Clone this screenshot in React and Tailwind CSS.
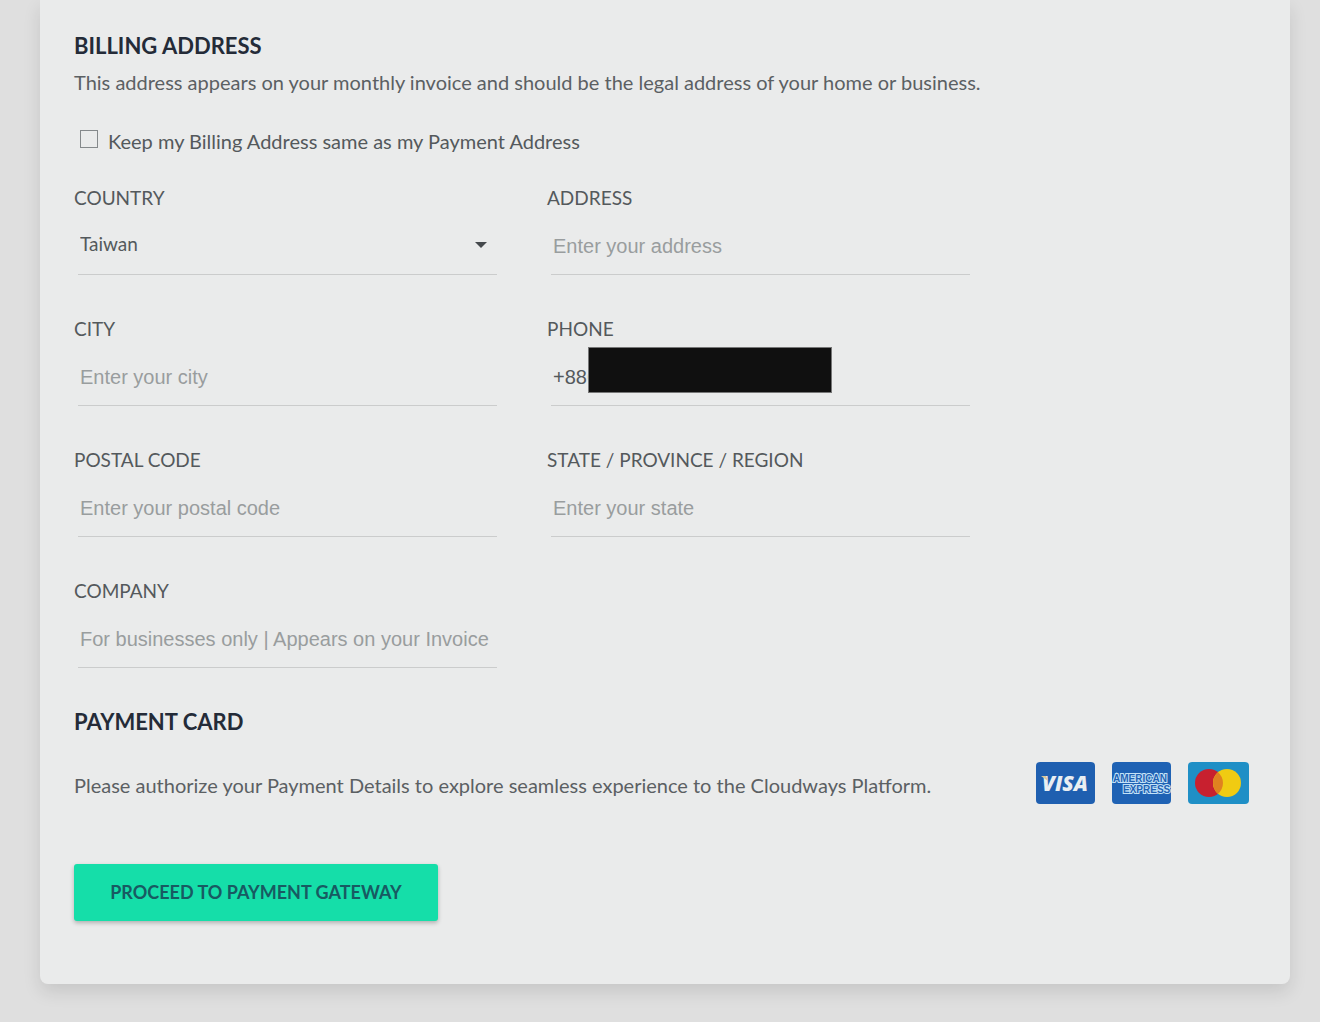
import React from "react";

const labelClass = "block text-[19px] leading-6 text-[#54595c]";
const lineClass = "h-[57px] w-full border-b border-[#cbcccc] bg-transparent outline-none";

function Field({ id, label, children }) {
  return (
    <div>
      <label htmlFor={id} className={labelClass}>{label}</label>
      <div className="relative mt-2 pl-1">{children}</div>
    </div>
  );
}

function TextField({ id, label, placeholder, defaultValue, children }) {
  return (
    <Field id={id} label={label}>
      <input
        id={id}
        type="text"
        placeholder={placeholder}
        defaultValue={defaultValue}
        className={`${lineClass} px-0.5 font-['Liberation_Sans',sans-serif] text-[20px] text-[#54595c] placeholder:text-[#999d9e]`}
      />
      {children}
    </Field>
  );
}

function Visa() {
  return (
    <svg viewBox="0 0 59 42" className="h-[42px] w-[59px]" role="img" aria-label="Visa">
      <rect width="59" height="42" rx="4" fill="#1f5fb0" />
      <text x="29" y="29" textAnchor="middle" fontFamily="Open Sans, sans-serif" fontSize="21" fontWeight="800" fontStyle="italic" fill="#e9eef2">VISA</text>
      <path d="M5 14h5l2 5z" fill="#d9c79a" />
    </svg>
  );
}

function Amex() {
  return (
    <svg viewBox="0 0 59 42" className="h-[42px] w-[59px]" role="img" aria-label="American Express">
      <rect width="59" height="42" rx="4" fill="#1f62b4" />
      <g fontFamily="Liberation Sans, sans-serif" fontSize="10" fontWeight="700" fill="#1f62b4" stroke="#c3e2f7" strokeWidth="2" paintOrder="stroke">
        <text x="1" y="20">AMERICAN</text>
        <text x="11" y="31">EXPRESS</text>
      </g>
    </svg>
  );
}

function Mastercard() {
  return (
    <svg viewBox="0 0 61 42" className="h-[42px] w-[61px]" role="img" aria-label="Mastercard">
      <rect width="61" height="42" rx="4" fill="#1f8fc6" />
      <circle cx="21" cy="21" r="14" fill="#c8202f" />
      <circle cx="39" cy="21" r="14" fill="#f0cb12" />
      <path d="M30 10.3a14 14 0 0 1 0 21.4a14 14 0 0 1 0-21.4z" fill="#e08120" />
    </svg>
  );
}

export default function App() {
  return (
    <div className="min-h-screen bg-[#dfdfdf] pr-[30px] pb-[38px] pl-10 font-['Lato',sans-serif]">
      <main className="rounded-b-lg bg-[#eaebeb] pt-[34px] pr-[41px] pb-[63px] pl-[34px] shadow-[0_8px_18px_rgba(0,0,0,0.11)]">
        <h2 className="text-[22px] leading-6 font-bold text-[#242b38]">BILLING ADDRESS</h2>
        <p className="mt-3 text-[20px] leading-6 text-[#5b6063]">
          This address appears on your monthly invoice and should be the legal address of your home or business.
        </p>

        <div className="mt-[35px] flex items-center gap-2.5 pl-1.5">
          <input id="same" type="checkbox" className="mb-1 size-[18px] appearance-none border border-[#85898b] checked:bg-[#15dea9]" />
          <label htmlFor="same" className="text-[20px] leading-6 text-[#54595c]">
            Keep my Billing Address same as my Payment Address
          </label>
        </div>

        <form className="mt-[33px] grid max-w-[896px] grid-cols-2 gap-x-[50px] gap-y-[42px]">
          <Field id="country" label="COUNTRY">
            <select id="country" className={`${lineClass} appearance-none px-0.5 pb-1 text-[19px] text-[#54595c]`}>
              <option>Taiwan</option>
            </select>
            <svg viewBox="0 0 12 6" className="pointer-events-none absolute top-6 right-2.5 h-1.5 w-3" aria-hidden="true">
              <path d="M0 0h12L6 6z" fill="#45494c" />
            </svg>
          </Field>
          <TextField id="address" label="ADDRESS" placeholder="Enter your address" />
          <TextField id="city" label="CITY" placeholder="Enter your city" />
          <TextField id="phone" label="PHONE" defaultValue="+886">
            <div className="absolute -top-0.5 left-[41px] h-[46px] w-[244px] border border-[#777] bg-[#101010]" />
          </TextField>
          <TextField id="postal" label="POSTAL CODE" placeholder="Enter your postal code" />
          <TextField id="state" label="STATE / PROVINCE / REGION" placeholder="Enter your state" />
          <TextField id="company" label="COMPANY" placeholder="For businesses only | Appears on your Invoice" />
        </form>

        <h2 className="mt-[42px] text-[22px] leading-6 font-bold text-[#242b38]">PAYMENT CARD</h2>
        <div className="mt-7 flex items-center justify-between gap-6">
          <p className="pt-1 text-[20px] leading-6 text-[#5b6063]">
            Please authorize your Payment Details to explore seamless experience to the Cloudways Platform.
          </p>
          <div className="flex shrink-0 gap-[17px]">
            <Visa />
            <Amex />
            <Mastercard />
          </div>
        </div>

        <button type="button" className="mt-[60px] h-[57px] w-[364px] rounded-[3px] bg-[#15dea9] text-[18px] font-bold text-[#185a62] shadow-[0_2px_4px_rgba(0,0,0,0.25)]">
          PROCEED TO PAYMENT GATEWAY
        </button>
      </main>
    </div>
  );
}
